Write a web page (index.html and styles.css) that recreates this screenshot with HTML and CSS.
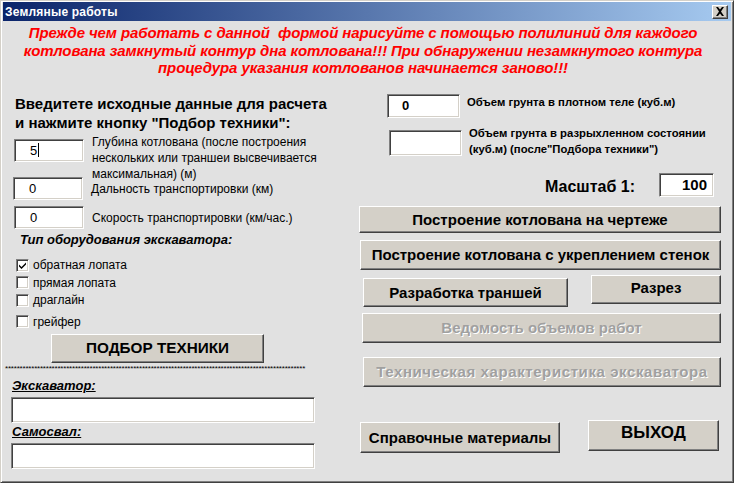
FILE: index.html
```html
<!DOCTYPE html>
<html lang="ru">
<head>
  <meta charset="UTF-8">
  <title>Земляные работы</title>
  <link rel="stylesheet" href="styles.css">
</head>
<body>
  <div class="window">
    <div class="titlebar">
      <span class="title">Земляные работы</span>
      <span class="close">
        <svg width="10" height="9" viewBox="0 0 10 9"><path d="M1 0h2l2 2.5L7 0h2L6 4.5 9 9H7L5 6.5 3 9H1l3-4.5z" fill="#000"/></svg>
      </span>
    </div>

    <div class="form">
      <p class="warning">
        Прежде чем работать с данной&nbsp; формой нарисуйте с помощью полилиний для каждого<br>
        котлована замкнутый контур дна котлована!!! При обнаружении незамкнутого контура<br>
        процедура указания котлованов начинается заново!!!
      </p>

      <div class="columns">
        <div class="left">
          <h2 class="heading">Введитете исходные данные для расчета<br>и нажмите кнопку "Подбор техники":</h2>

          <div class="field field-depth">
            <div class="input small">5<span class="caret"></span></div>
            <label>Глубина котлована (после построения<br>нескольких или траншеи высвечивается<br>максимальная) (м)</label>
          </div>
          <div class="field field-dist">
            <div class="input small">0</div>
            <label>Дальность транспортировки (км)</label>
          </div>
          <div class="field field-speed">
            <div class="input small">0</div>
            <label>Скорость транспортировки (км/час.)</label>
          </div>

          <p class="group-title">Тип оборудования экскаватора:</p>
          <ul class="checks">
            <li><span class="box"><svg width="9" height="9" viewBox="0 0 9 9"><path d="M1 3.5l2.5 2.5L8 1.5v2L3.5 8 1 5.5z" fill="#000"/></svg></span>обратная лопата</li>
            <li><span class="box"></span>прямая лопата</li>
            <li><span class="box"></span>драглайн</li>
            <li class="last"><span class="box"></span>грейфер</li>
          </ul>

          <button class="btn btn-pick">ПОДБОР ТЕХНИКИ</button>
          <div class="stars">*******************************************************************************************************</div>

          <p class="result-title first">Экскаватор:</p>
          <div class="input wide"></div>
          <p class="result-title">Самосвал:</p>
          <div class="input wide"></div>
        </div>

        <div class="right">
          <div class="volume volume-dense">
            <div class="input mid">0</div>
            <label>Объем грунта в плотном теле (куб.м)</label>
          </div>
          <div class="volume volume-loose">
            <div class="input mid tall"></div>
            <label>Объем грунта в разрыхленном состоянии<br>(куб.м) (после"Подбора техники")</label>
          </div>
          <div class="scale">
            <span>Масштаб 1:</span>
            <div class="input scale-input">100</div>
          </div>

          <button class="btn btn-draw">Построение котлована на чертеже</button>
          <button class="btn btn-walls">Построение котлована с укреплением стенок</button>
          <div class="btn-row">
            <button class="btn btn-trench">Разработка траншей</button>
            <button class="btn btn-cut">Разрез</button>
          </div>
          <button class="btn btn-volumes" disabled>Ведомость объемов работ</button>
          <button class="btn btn-specs" disabled>Техническая характеристика экскаватора</button>
          <div class="btn-row bottom">
            <button class="btn btn-help">Справочные материалы</button>
            <button class="btn btn-exit">ВЫХОД</button>
          </div>
        </div>
      </div>
    </div>
  </div>
</body>
</html>
```

FILE: styles.css
```css
* {
  box-sizing: border-box;
}
body {
  margin: 0;
  font-family: "Liberation Sans", Arial, sans-serif;
  background: #e1e1e1;
}
.window {
  width: 734px;
  height: 483px;
  background: #e1e1e1;
  border-top: 1px solid #d4d0c8;
  border-left: 1px solid #d4d0c8;
  border-right: 1px solid #404040;
  border-bottom: 1px solid #404040;
  box-shadow: inset 1px 1px 0 #fff, inset -1px -1px 0 #808080;
  padding: 1px 2px 2px 2px;
  overflow: hidden;
}
.titlebar {
  height: 19px;
  background: linear-gradient(to right, #0a246a, #a6caf0);
  display: flex;
  align-items: center;
  justify-content: space-between;
  padding: 0 2px 0 2px;
}
.title {
  color: #fff;
  font-weight: bold;
  font-size: 12px;
  letter-spacing: 0.2px;
}
.close {
  width: 16px;
  height: 14px;
  background: #d4d0c8;
  border-top: 1px solid #fff;
  border-left: 1px solid #fff;
  border-right: 1px solid #404040;
  border-bottom: 1px solid #404040;
  box-shadow: inset -1px -1px 0 #808080;
  display: flex;
  align-items: center;
  justify-content: center;
  margin-right: 1px;
}
.warning {
  margin: 3px 0 0 0;
  text-align: center;
  color: #ff0000;
  font-weight: bold;
  font-style: italic;
  font-size: 15px;
  line-height: 17.5px;
  letter-spacing: -0.1px;
  padding-right: 8px;
}
.columns {
  display: grid;
  grid-template-columns: 352px 1fr;
  margin-top: 17px;
}

/* inputs */
.input {
  background: #fff;
  border-top: 1px solid #808080;
  border-left: 1px solid #808080;
  border-right: 1px solid #fff;
  border-bottom: 1px solid #fff;
  box-shadow: inset 1px 1px 0 #404040, inset -1px -1px 0 #d4d0c8;
  font-size: 13px;
  display: flex;
  align-items: center;
}
.input.small {
  width: 70px;
  height: 23px;
  padding-left: 15px;
  flex-shrink: 0;
}
.caret {
  display: inline-block;
  width: 1px;
  height: 14px;
  background: #000;
  margin-left: 1px;
}
.input.wide {
  width: 304px;
  height: 26px;
  margin-left: -1px;
}

/* left column */
.left {
  padding-left: 9px;
}
.heading {
  margin: 0 0 0 3px;
  font-size: 15px;
  line-height: 19px;
  font-weight: bold;
}
.field {
  display: flex;
  align-items: flex-start;
}
.field label {
  font-size: 12px;
  line-height: 16px;
  margin-left: 8px;
}
.field-depth {
  height: 38px;
  margin-top: 7px;
  margin-left: 2px;
}
.field-depth label {
  margin-top: -5px;
}
.field-dist {
  height: 29px;
  margin-left: 1px;
}
.field-dist label {
  margin-top: 4px;
}
.field-speed {
  margin-left: 2px;
}
.field-speed label {
  margin-top: 4px;
}
.group-title {
  margin: 3px 0 0 8px;
  font-size: 13px;
  font-weight: bold;
  font-style: italic;
}
.checks {
  list-style: none;
  margin: 10px 0 0 4px;
  padding: 0;
  font-size: 12px;
}
.checks li {
  display: flex;
  align-items: center;
  height: 17.5px;
}
.checks li.last {
  margin-top: 4px;
}
.box {
  width: 13px;
  height: 13px;
  background: #fff;
  border-top: 1px solid #808080;
  border-left: 1px solid #808080;
  border-right: 1px solid #fff;
  border-bottom: 1px solid #fff;
  box-shadow: inset 1px 1px 0 #404040, inset -1px -1px 0 #d4d0c8;
  margin-right: 4px;
  display: flex;
  align-items: center;
  justify-content: center;
}

/* buttons */
.btn {
  display: block;
  background: #d4d0c8;
  border-top: 1px solid #fff;
  border-left: 1px solid #fff;
  border-right: 1px solid #404040;
  border-bottom: 1px solid #404040;
  box-shadow: inset -1px -1px 0 #808080;
  font-family: "Liberation Sans", Arial, sans-serif;
  font-weight: bold;
  font-size: 15px;
  color: #000;
  padding: 0;
}
.btn:disabled {
  color: #a0a0a0;
  text-shadow: 1px 1px 0 #fff;
}
.btn-pick {
  width: 213px;
  height: 29px;
  margin: 3px 0 0 39px;
  font-size: 15.3px;
}
.stars {
  width: 305px;
  margin: 2px 0 0 -7px;
  font-size: 8px;
  line-height: 7px;
  letter-spacing: -0.2px;
  white-space: nowrap;
}
.result-title {
  margin: 1px 0 4px 0;
  font-size: 13px;
  line-height: 15px;
  font-weight: bold;
  font-style: italic;
  text-decoration: underline;
}
.result-title.first {
  margin-top: 6px;
}

/* right column */
.right {
  padding-left: 4px;
}
.volume {
  display: flex;
}
.volume label {
  font-size: 11.3px;
  font-weight: bold;
  line-height: 16px;
  margin-left: 7px;
}
.input.mid {
  width: 73px;
  height: 24px;
  padding-left: 14px;
  font-weight: bold;
}
.input.tall {
  height: 26px;
}
.volume-dense {
  margin: 0 0 0 28px;
}
.volume-loose {
  margin: 12px 0 0 30px;
}
.volume-loose label {
  margin-top: -5px;
}
.scale {
  display: flex;
  align-items: center;
  justify-content: flex-end;
  margin: 16px 17px 0 0;
  font-size: 16px;
  font-weight: bold;
}
.scale span {
  padding-top: 4px;
}
.scale-input {
  width: 55px;
  height: 24px;
  margin-left: 24px;
  justify-content: flex-end;
  padding-right: 6px;
  font-size: 15px;
}
.btn-draw {
  width: 362px;
  height: 27px;
  margin-top: 9px;
}
.btn-walls {
  width: 361px;
  height: 30px;
  margin: 7px 0 0 1px;
}
.btn-row {
  display: flex;
  align-items: flex-start;
}
.btn-trench {
  width: 205px;
  height: 29px;
  margin: 8px 0 0 4px;
}
.btn-cut {
  width: 130px;
  height: 29px;
  margin: 5px 0 0 23px;
  padding-bottom: 4px;
}
.btn-volumes {
  width: 359px;
  height: 30px;
  margin: 6px 0 0 3px;
}
.btn-specs {
  width: 358px;
  height: 30px;
  margin: 14px 0 0 4px;
  letter-spacing: 0.6px;
}
.btn-help {
  width: 200px;
  height: 31px;
  margin: 35px 0 0 1px;
}
.btn-exit {
  width: 131px;
  height: 31px;
  margin: 33px 0 0 28px;
  font-size: 17px;
  padding-bottom: 4px;
}
```
